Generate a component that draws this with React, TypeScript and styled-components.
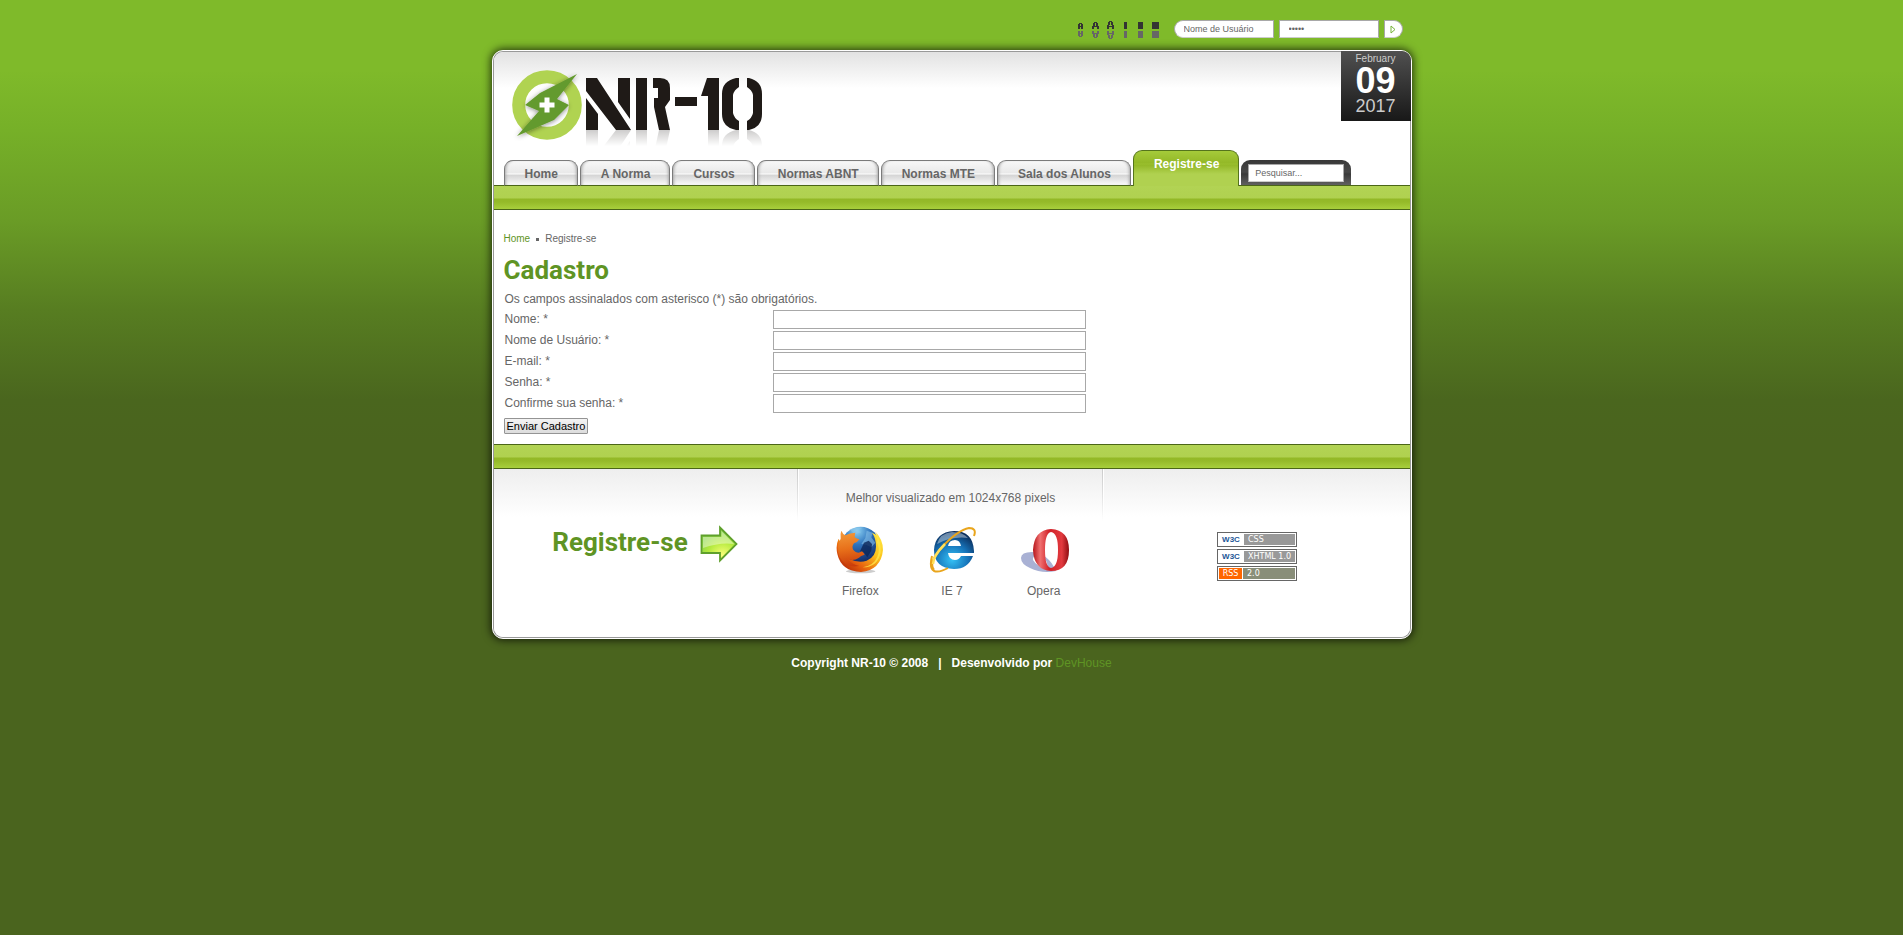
import React from "react";
import styled, { createGlobalStyle, css } from "styled-components";

const Global = createGlobalStyle`
  html { background: #4a641e; }
  body {
    margin: 0;
    color: #666;
    font: 12px/18px "Liberation Sans", Arial, sans-serif;
    background: linear-gradient(#7fba2a 0, #7fba2a 70px, #76b028 130px, #6a9c26 220px, #577d21 310px, #4a661e 400px, #4a641e 440px) no-repeat;
    min-height: 100vh;
  }
  input, button { font-family: inherit; color: inherit; box-sizing: border-box; margin: 0; outline: 0; }
  a { text-decoration: none; }
`;

const Page = styled.div`
  max-width: 920px;
  margin: 0 auto;
`;

const Toolbar = styled.div`
  display: flex;
  justify-content: flex-end;
  gap: 13px;
  padding: 20px 9px 10px 0;
`;

const SizeTools = styled.div`
  display: flex;
`;

const ToolButton = styled.button`
  border: 0;
  padding: 0;
  background: none;
  display: flex;
`;

const Login = styled.form`
  display: flex;
  gap: 5px;
`;

const LoginField = styled.input<{ $round?: boolean }>`
  width: 100px;
  height: 18px;
  padding: 0 0 0 9px;
  border: 1px solid #a8a8a8;
  border-bottom-color: #ccc;
  border-radius: ${(p) => (p.$round ? "9px 0 0 9px" : "0")};
  background: #fff;
  color: #666;
  font-size: 9px;
  &::placeholder { color: #666; opacity: 1; }
`;

const LoginButton = styled.button`
  width: 19px;
  height: 18px;
  padding: 0 0 0 5px;
  border: 1px solid #a8a8a8;
  border-bottom-color: #ccc;
  border-radius: 0 9px 9px 0;
  background: #fff;
  display: flex;
  align-items: center;
`;

const Card = styled.main`
  border: 1px solid #fff;
  border-radius: 11px;
  background: #999;
  padding: 1px;
  box-shadow: 0 0 8px 1px rgba(0, 0, 0, 0.75);
`;

const Sheet = styled.div`
  border-radius: 9px;
  background: #fff;
`;

const Header = styled.header`
  display: flex;
  justify-content: space-between;
  align-items: flex-start;
  height: 98px;
  border-radius: 9px 9px 0 0;
  background: linear-gradient(#e2e2e2, #fff 36px);
`;

const LogoLink = styled.a`
  display: block;
  margin: 14px 0 0 16px;
`;

const DateBox = styled.time`
  width: 70px;
  height: 70px;
  margin: -1px -1px 0 0;
  border-top-right-radius: 9px;
  background: linear-gradient(#505050, #181818);
  display: flex;
  flex-direction: column;
  align-items: center;
  color: #ccc;
`;

const Month = styled.span`
  font-size: 10px;
  line-height: 16px;
`;

const Day = styled.span`
  font-size: 36px;
  line-height: 28px;
  font-weight: bold;
  color: #fff;
`;

const Year = styled.span`
  font-size: 18px;
  line-height: 22px;
`;

const Nav = styled.nav`
  display: flex;
  align-items: flex-end;
  gap: 2px;
  height: 36px;
  margin-bottom: -1px;
  padding-left: 10px;
`;

const Tab = styled.a<{ $active?: boolean }>`
  position: relative;
  box-sizing: border-box;
  height: 26px;
  padding: 4px 19px 0 20px;
  border: 1px solid #7b7b7b;
  border-bottom: 1px solid #4b6617;
  border-radius: 9px 9px 0 0;
  font-weight: bold;
  line-height: 18px;
  color: #666;
  white-space: nowrap;
  background: linear-gradient(#f8f8f8, #e9e9e9 12px, #fff 13px, #d4d4d4 14px, #fafafa 24px);
  box-shadow: inset 3px 0 3px -2px #aaa, inset -3px 0 3px -2px #aaa;
  ${(p) =>
    p.$active &&
    css`
      height: 36px;
      border-color: #55741c;
      border-bottom: 0;
      color: #fff;
      background: linear-gradient(#a5cb3a, #93b827 12px, #9cc130 13px, #93b827 14px, #b0d150 23px);
      box-shadow: none;
    `}
`;

const SearchTab = styled.form`
  box-sizing: border-box;
  height: 26px;
  padding: 4px 7px 0;
  border-radius: 9px 9px 0 0;
  background: linear-gradient(#383838, #484848 12px, #3a3a3a 14px, #606060);
  border-bottom: 1px solid #4b6617;
`;

const SearchField = styled.input`
  display: block;
  width: 96px;
  height: 18px;
  padding: 0 6px;
  border: 1px solid #a8a8a8;
  border-bottom-color: #ccc;
  background: #fff;
  font-size: 9px;
  &::placeholder { color: #666; opacity: 1; }
`;

const Band = styled.div`
  height: 23px;
  border: solid #4b6617;
  border-width: 1px 0;
  background: linear-gradient(#b2d354, #b0d150 12px, #93b827 13px, #95ba29 16px, #a8cf3c 23px);
`;

const Content = styled.section`
  padding: 20px 10px 10px;
`;

const Crumbs = styled.nav`
  display: flex;
  align-items: center;
  gap: 6px;
  font-size: 10px;
  line-height: 18px;
`;

const GreenLink = styled.a`
  color: #5f9424;
`;

const Bullet = styled.i`
  width: 3px;
  height: 3px;
  background: #666;
`;

const heading = css`
  margin: 0;
  color: #5f9424;
  font: bold 26px/34px Roboto, "Liberation Sans", sans-serif;
`;

const Title = styled.h1`
  ${heading}
  padding-top: 5px;
`;

const Note = styled.p`
  margin: 0;
  padding: 3px 1px 2px;
`;

const Row = styled.div`
  display: grid;
  grid-template-columns: 268px minmax(0, 313px);
  height: 19px;
  margin-bottom: 2px;
  padding-left: 1px;
`;

const Field = styled.input`
  height: 19px;
  border: 1px solid #a8a8a8;
  background: #fff;
  padding: 0 3px;
  font-size: 12px;
`;

const Submit = styled.button`
  display: block;
  height: 16px;
  margin-top: 5px;
  padding: 0 2px;
  border: 1px solid #949494;
  border-radius: 1px;
  background: linear-gradient(#f4f4f4, #dcdcdc);
  color: #000;
  font-size: 11px;
  line-height: 14px;
`;

const Footer = styled.footer`
  display: grid;
  grid-template-columns: 303px 305px minmax(0, 1fr);
  height: 168px;
  border-radius: 0 0 9px 9px;
  background: linear-gradient(#eee, #fff 48px);
`;

const Column = styled.div<{ $divided?: boolean }>`
  ${(p) =>
    p.$divided &&
    css`
      background: linear-gradient(#ccc, rgba(204, 204, 204, 0)) left top / 1px 52px no-repeat,
        linear-gradient(#fff, #fff) 1px 0 / 1px 52px no-repeat;
    `}
`;

const Register = styled.a`
  display: flex;
  justify-content: center;
  gap: 12px;
  padding-top: 56px;
`;

const RegisterText = styled.h2`
  ${heading}
`;

const Best = styled.p`
  margin: 0;
  padding: 20px 0 19px 3px;
  text-align: center;
`;

const Browsers = styled.div`
  display: grid;
  grid-template-columns: repeat(3, 1fr);
  padding: 0 12px 0 18px;
`;

const Browser = styled.a`
  display: flex;
  flex-direction: column;
  align-items: center;
  gap: 8px;
  color: #666;
`;

const Badges = styled.div`
  display: flex;
  flex-direction: column;
  align-items: center;
  gap: 2px;
  padding: 63px 0 0 3px;
`;

const Badge = styled.a`
  box-sizing: border-box;
  display: flex;
  gap: 1px;
  width: 80px;
  height: 15px;
  padding: 1px;
  border: 1px solid #666;
  background: #fff;
  font: 8px/11px "DejaVu Sans", sans-serif;
`;

const BadgeName = styled.span<{ $rss?: boolean }>`
  width: ${(p) => (p.$rss ? "23px" : "24px")};
  text-align: center;
  ${(p) =>
    p.$rss
      ? css`background: #f60; color: #fff;`
      : css`color: #1c5797; font: bold 8px/11px "Liberation Sans", sans-serif;`}
`;

const BadgeText = styled.span<{ $rss?: boolean }>`
  flex: 1;
  padding-left: 4px;
  color: #fff;
  background: ${(p) => (p.$rss ? "#898e79" : "#999")};
`;

const Copyright = styled.p`
  margin: 0;
  padding: 15px 0 0;
  text-align: center;
  font-weight: bold;
  color: #fff;
  a { font-weight: normal; }
`;

const LogoArt = styled.svg`
  display: block;
`;

const Logo = () => (
  <LogoArt width="256" height="84" viewBox="0 0 256 84" role="img" aria-label="NR-10">
    <defs>
      <linearGradient id="fade" x1="0" y1="0" x2="0" y2="1">
        <stop offset="0" stopColor="#fff" stopOpacity=".78" />
        <stop offset="1" stopColor="#fff" />
      </linearGradient>
      <filter id="soft" x="-20%" y="-20%" width="140%" height="140%">
        <feDropShadow dx="0" dy="1" stdDeviation="2.5" floodOpacity=".45" />
      </filter>
      <g id="mark">
        <path d="M0 0h11L45 52H30L0 13zM0 20l12 16v16H0zM32 0h12v41L32 24zM50 0h11v52H50z" />
        <path d="M67 0h7q10 0 10 10v12l-5 7 5 23H73l-5-23V20h4V10h-5z" />
        <path d="M89 19h22v9H89zM121 0h12v52h-11V18h-7z" />
        <path d="M153 0v9q-5 3-6 8v18q1 5 6 8v9h-3q-14-3-14-16V16q0-13 14-16zM161 0h2q13 3 13 16v20q0 13-13 16h-2v-9q5-3 6-8V17q-1-5-6-8z" />
      </g>
    </defs>
    <circle cx="37" cy="39" r="28.300" fill="none" stroke="#b0d351" strokeWidth="13" />
    <path d="M67 8 30 27 15 39l14 6L7 70l37-16 15-15-12-6z" fill="#649a2e" filter="url(#soft)" />
    <path d="M34.500 31.500h5v5h5v5h-5v5h-5v-5h-5v-5h5z" fill="#fff" />
    <use href="#mark" x="76" y="12" fill="#1f1a17" />
    <g transform="translate(76 116) scale(1 -1)"><use href="#mark" fill="#1f1a17" /></g>
    <path d="M76 64h180v16H76z" fill="url(#fade)" />
    <path d="M76 80h180v4H76z" fill="#fff" />
  </LogoArt>
);

const Firefox = () => (
  <svg width="48" height="48" viewBox="0 0 144 144" aria-hidden="true">
    <defs>
      <radialGradient id="ffGlobe" cx=".4" cy=".1" r=".8"><stop stopColor="#8fd4f4" /><stop offset=".45" stopColor="#2f74bd" /><stop offset="1" stopColor="#14306e" /></radialGradient>
      <linearGradient id="ffTail" x1="1" y1="0" x2=".1" y2="1"><stop stopColor="#fff04a" /><stop offset=".4" stopColor="#fcc31c" /><stop offset=".7" stopColor="#e8630f" /><stop offset="1" stopColor="#a81a05" /></linearGradient>
      <linearGradient id="ffHead" x1=".4" y1="0" x2=".5" y2="1"><stop stopColor="#f39a3a" /><stop offset=".5" stopColor="#e8701a" /><stop offset="1" stopColor="#c93a0a" /></linearGradient>
    </defs>
    <ellipse cx="74" cy="136" rx="44" ry="6" fill="#999" opacity=".5" />
    <circle cx="74" cy="60" r="58" fill="url(#ffGlobe)" />
    <path d="M40 10q20-8 40-5l-14 8 10 6-20 6zM92 14l18 6-4 14 12 16-12 14-16-8-14-2 12-18z" fill="#8cc4ea" opacity=".55" />
    <path d="M84 50l14-6 10 10-2 20-12 20-10-14-12-4z" fill="#0c2558" opacity=".8" />
    <path d="M117 16q24 24 24 56-6 60-66 66Q16 136 4 84q-6-26 4-46l30 60q30 14 54 6 28-12 28-42 0-26-12-42l16 8z" fill="url(#ffTail)" />
    <path d="M118 18q10 24 4 30 12 20 2 44-10 26-44 32 44 0 54-44 2-34-16-62z" fill="#ffe94a" opacity=".8" />
    <path d="M16 14q4 10 12 14 14-8 30-8-2 8-2 14 6 4 14 6-6 10-16 12-8 10-2 20 12 14 26 4 6 6 8 10-12 2-18 10 -14 10-32 4 12 16 34 20-40 8-60-28Q0 62 14 38q-2-14 2-24z" fill="url(#ffHead)" />
  </svg>
);

const Explorer = () => (
  <svg width="48" height="48" viewBox="0 0 48 48" aria-hidden="true">
    <defs>
      <radialGradient id="ieBlue" cx=".45" cy=".75" r=".75"><stop stopColor="#35c2f6" /><stop offset=".55" stopColor="#1672b8" /><stop offset="1" stopColor="#0b2c59" /></radialGradient>
    </defs>
    <path d="M26 5q19 0 20 20v2H20q1 7 7 7 4 0 6-4h12q-5 13-19 13Q6 42 6 24 7 6 26 5zm-6 15h13q-1-6-6-6-6 0-7 6z" fill="url(#ieBlue)" fillRule="evenodd" />
    <path d="M9 18q3-11 15-12 11 0 16 6-16-2-31 6z" fill="#fff" opacity=".4" />
    <path d="M4 30q-3 12 2 15 5 2 14-3M6 44Q0 37 14 21 30 4 41 2q8 0 5 8" fill="none" stroke="#e9a51c" strokeWidth="2" />
    <path d="M5 38q0-8 12-20" fill="none" stroke="#ffe05a" strokeWidth="2.500" />
  </svg>
);

const Opera = () => (
  <svg width="50" height="48" viewBox="0 0 50 48" aria-hidden="true">
    <defs>
      <linearGradient id="opRed"><stop stopColor="#b51419" /><stop offset=".2" stopColor="#f07070" /><stop offset=".45" stopColor="#d02027" /><stop offset=".8" stopColor="#e23a3f" /><stop offset="1" stopColor="#8e0c10" /></linearGradient>
    </defs>
    <path d="M2 32q0-6 11-6 16 1 24 19-14 3-26-3-9-4-9-10zm17-2q-6 0-5 4 4 7 14 8 2-9-9-12z" fill="#a9b1d4" fillRule="evenodd" />
    <path d="M32 3q18 1 18 21 0 21-18 21-17-1-18-21Q15 4 32 3zm0 3q-6 1-6 18t6 18q7-1 7-18T32 6z" fill="url(#opRed)" fillRule="evenodd" />
  </svg>
);

const Arrow = () => (
  <svg width="38" height="38" viewBox="0 0 38 38" aria-hidden="true">
    <defs>
      <radialGradient id="arrowFill" cx=".6" cy=".85" r=".7"><stop stopColor="#fbff7a" /><stop offset=".6" stopColor="#b4ea3e" /><stop offset="1" stopColor="#8ed64a" /></radialGradient>
    </defs>
    <path d="M1.500 10.500h18.500v-8L36.500 19 20 35.500v-7.500H1.500z" fill="url(#arrowFill)" stroke="#5fa02c" strokeWidth="1.800" />
    <path d="M3 12h18.500V6L34 19q-14-2-31 4z" fill="#fff" opacity=".4" />
  </svg>
);

const tools = [
  { label: "Fonte menor", w: 14, d: "M1 6h3v1H1zM0 7h2v5H0zM3 7h2v5H3zM2 9h1v1H2z" },
  { label: "Fonte normal", w: 15, d: "M2 5h3v1H2zM1 6h2v3H1zM4 6h2v3H4zM0 9h7v1H0zM0 10h2v2H0zM5 10h2v2H5z" },
  { label: "Fonte maior", w: 17, d: "M2 4h3v1H2zM1 5h2v3H1zM4 5h2v3H4zM0 8h2v4H0zM5 8h2v4H5zM2 9h3v1H2z" },
  { label: "Largura menor", w: 14, d: "M0 5h3v7H0z" },
  { label: "Largura normal", w: 14, d: "M0 5h5v7H0z" },
  { label: "Largura maior", w: 9, d: "M0 5h7v7H0z" },
];

const fields = [
  { id: "name", label: "Nome: *", type: "text" },
  { id: "username", label: "Nome de Usuário: *", type: "text" },
  { id: "email", label: "E-mail: *", type: "email" },
  { id: "password", label: "Senha: *", type: "password" },
  { id: "confirm", label: "Confirme sua senha: *", type: "password" },
];

export default function App() {
  return (
    <>
      <Global />
      <Page>
        <Toolbar>
          <SizeTools>
            {tools.map((t) => (
              <ToolButton key={t.label} type="button" aria-label={t.label}>
                <svg width={t.w} height="20" viewBox={`0 3 ${t.w} 20`} shapeRendering="crispEdges">
                  <path d={t.d} fill="#333" />
                  <path d={t.d} fill="#666" transform="translate(0 26) scale(1 -1)" />
                </svg>
              </ToolButton>
            ))}
          </SizeTools>
          <Login>
            <LoginField $round aria-label="Nome de Usuário" placeholder="Nome de Usuário" />
            <LoginField type="password" aria-label="Senha" defaultValue="senha" />
            <LoginButton type="button" aria-label="Entrar">
              <svg width="7" height="9" viewBox="0 0 7 9"><path d="M1 1v7l4-3.500z" fill="#fff" stroke="#76b33a" /></svg>
            </LoginButton>
          </Login>
        </Toolbar>
        <Card>
          <Sheet>
            <Header>
              <LogoLink href="#"><Logo /></LogoLink>
              <DateBox dateTime="2017-02-09">
                <Month>February</Month>
                <Day>09</Day>
                <Year>2017</Year>
              </DateBox>
            </Header>
            <Nav>
              {["Home", "A Norma", "Cursos", "Normas ABNT", "Normas MTE", "Sala dos Alunos"].map((t) => (
                <Tab key={t} href="#">{t}</Tab>
              ))}
              <Tab href="#" $active>Registre-se</Tab>
              <SearchTab>
                <SearchField aria-label="Pesquisar" placeholder="Pesquisar..." />
              </SearchTab>
            </Nav>
            <Band />
            <Content>
              <Crumbs>
                <GreenLink href="#">Home</GreenLink>
                <Bullet />
                <span>Registre-se</span>
              </Crumbs>
              <Title>Cadastro</Title>
              <form>
                <Note>Os campos assinalados com asterisco (*) são obrigatórios.</Note>
                {fields.map((f) => (
                  <Row key={f.id}>
                    <label htmlFor={f.id}>{f.label}</label>
                    <Field id={f.id} type={f.type} />
                  </Row>
                ))}
                <Submit type="button">Enviar Cadastro</Submit>
              </form>
            </Content>
            <Band />
            <Footer>
              <Column>
                <Register href="#">
                  <RegisterText>Registre-se</RegisterText>
                  <Arrow />
                </Register>
              </Column>
              <Column $divided>
                <Best>Melhor visualizado em 1024x768 pixels</Best>
                <Browsers>
                  <Browser href="#"><Firefox />Firefox</Browser>
                  <Browser href="#"><Explorer />IE 7</Browser>
                  <Browser href="#"><Opera />Opera</Browser>
                </Browsers>
              </Column>
              <Column $divided>
                <Badges>
                  <Badge href="#"><BadgeName>W3C</BadgeName><BadgeText>CSS</BadgeText></Badge>
                  <Badge href="#"><BadgeName>W3C</BadgeName><BadgeText>XHTML 1.0</BadgeText></Badge>
                  <Badge href="#"><BadgeName $rss>RSS</BadgeName><BadgeText $rss>2.0</BadgeText></Badge>
                </Badges>
              </Column>
            </Footer>
          </Sheet>
        </Card>
        <Copyright>
          Copyright NR-10 © 2008 &nbsp; | &nbsp; Desenvolvido por <GreenLink href="#">DevHouse</GreenLink>
        </Copyright>
      </Page>
    </>
  );
}
